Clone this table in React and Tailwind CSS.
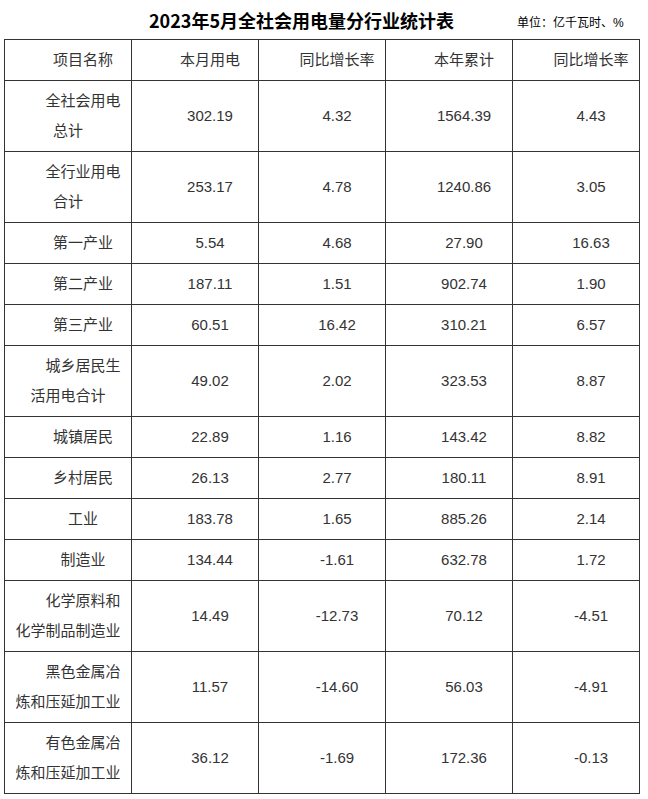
import React from "react";

const rows = [
  ["全社会用电总计", "302.19", "4.32", "1564.39", "4.43"],
  ["全行业用电合计", "253.17", "4.78", "1240.86", "3.05"],
  ["第一产业", "5.54", "4.68", "27.90", "16.63"],
  ["第二产业", "187.11", "1.51", "902.74", "1.90"],
  ["第三产业", "60.51", "16.42", "310.21", "6.57"],
  ["城乡居民生活用电合计", "49.02", "2.02", "323.53", "8.87"],
  ["城镇居民", "22.89", "1.16", "143.42", "8.82"],
  ["乡村居民", "26.13", "2.77", "180.11", "8.91"],
  ["工业", "183.78", "1.65", "885.26", "2.14"],
  ["制造业", "134.44", "-1.61", "632.78", "1.72"],
  ["化学原料和化学制品制造业", "14.49", "-12.73", "70.12", "-4.51"],
  ["黑色金属冶炼和压延加工业", "11.57", "-14.60", "56.03", "-4.91"],
  ["有色金属冶炼和压延加工业", "36.12", "-1.69", "172.36", "-0.13"],
];

const headers = ["项目名称", "本月用电", "同比增长率", "本年累计", "同比增长率"];

const Cell = ({ children }) => (
  <td className="border border-[#333] px-[6px] py-[5px] text-center indent-[30px] leading-[30px] align-middle">
    {children}
  </td>
);

export default function App() {
  return (
    <div className="w-[648px] bg-white text-[#333] font-['Liberation_Sans','Noto_Sans_CJK_SC',sans-serif]">
      {/* Title */}
      <div className="flex items-center h-[39px]">
        <div className="ml-[149px] w-[340px] whitespace-nowrap text-[18px] font-bold text-black font-['Noto_Sans_CJK_SC',sans-serif] leading-none">
          2023年5月全社会用电量分行业统计表
        </div>
        <div className="ml-[28px] mt-[6px] whitespace-nowrap text-[12px] text-black leading-none">
          单位：亿千瓦时、%
        </div>
      </div>

      {/* Table */}
      <table className="ml-[4px] w-[636px] table-fixed border-collapse text-[15px]">
        <thead>
          <tr>
            {headers.map((h, i) => (
              <Cell key={i}>{h}</Cell>
            ))}
          </tr>
        </thead>
        <tbody>
          {rows.map((r, i) => (
            <tr key={i}>
              {r.map((c, j) => (
                <Cell key={j}>{c}</Cell>
              ))}
            </tr>
          ))}
        </tbody>
      </table>
    </div>
  );
}
